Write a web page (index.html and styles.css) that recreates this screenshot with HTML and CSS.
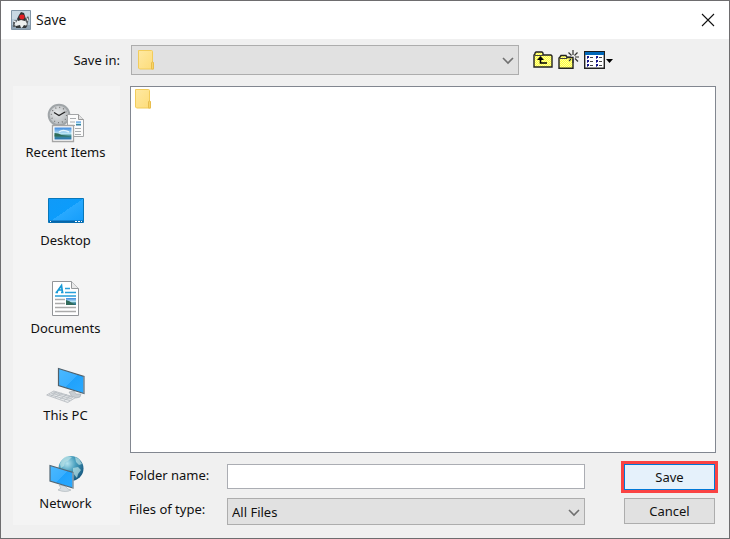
FILE: index.html
```html
<!DOCTYPE html>
<html lang="en">
<head>
<meta charset="utf-8">
<title>Save</title>
<link rel="stylesheet" href="styles.css">
</head>
<body>
<svg class="defs" aria-hidden="true">
  <defs>
    <linearGradient id="screen" x1="0" y1="0" x2="1" y2="1"><stop offset="0" stop-color="#109af8"/><stop offset=".5" stop-color="#0c9cfb"/><stop offset=".5" stop-color="#28a9ff"/><stop offset="1" stop-color="#139cfa"/></linearGradient>
    <linearGradient id="monitor" x1="0" y1="0" x2="1" y2="1"><stop offset="0" stop-color="#4bb9ff"/><stop offset=".5" stop-color="#3aafff"/><stop offset=".5" stop-color="#20a2fc"/><stop offset="1" stop-color="#2aa9ff"/></linearGradient>
    <linearGradient id="photo" x1="0" y1="0" x2="0" y2="1"><stop offset="0" stop-color="#3c87dc"/><stop offset=".5" stop-color="#b9e4f5"/><stop offset=".7" stop-color="#3d8a8f"/><stop offset="1" stop-color="#2b75b5"/></linearGradient>
    <linearGradient id="folder-fill" x1="0" y1="0" x2="1" y2="1"><stop offset="0" stop-color="#ffe9a2"/><stop offset="1" stop-color="#fddc79"/></linearGradient>
    <radialGradient id="globe" cx=".35" cy=".3" r=".75"><stop offset="0" stop-color="#b5e3ee"/><stop offset=".45" stop-color="#489fbe"/><stop offset="1" stop-color="#15577f"/></radialGradient>
    <radialGradient id="clock" cx=".4" cy=".4" r=".6"><stop offset="0" stop-color="#e6e8e9"/><stop offset="1" stop-color="#b5b9bc"/></radialGradient>
    <pattern id="dither" width="2" height="2" patternUnits="userSpaceOnUse"><path fill="#ffff3c" d="M0 0h2v2H0z"/><path fill="#ffffa0" d="M0 0h1v1H0zM1 1h1v1H1z"/></pattern>
    <symbol id="folder" viewBox="0 0 18 20">
      <path d="M1.500 .5h13q1 0 1 1V12l1 1v6H2.500l-1-1z" fill="url(#folder-fill)" stroke="#f2cc5b"/>
      <path d="M14.500 19v-6l1-1.500 1 1.500v6z" fill="#f8d569" stroke="#e8bd4d"/>
    </symbol>
    <symbol id="chevron" viewBox="0 0 12 8"><path d="M1 1l5 5 5-5" fill="none" stroke="#707070" stroke-width="1.600"/></symbol>
  </defs>
</svg>
<main class="window">
  <header class="titlebar">
    <svg class="app-icon" viewBox="0 0 20 20" aria-hidden="true">
      <path d="M.5.5h19v19H.5z" fill="#b4c7d6" stroke="#8195a6"/>
      <path d="M1 1h18v8H1z" fill="#c8d7e2"/>
      <path d="M1 15h18v4H1z" fill="#8fa3b3"/>
      <path d="M2 11l4-1 2 4-2 3H2zM13 11l4-5 1 2-2 9-3-2z" fill="#5c6265"/>
      <path d="M6 11l4-3 4 2 2 4-2 3-8 1-2-3z" fill="#edf0ef"/>
      <path d="M6 9l2-4 2-3 3 1 2 6-1 2-4-1-3 1z" fill="#303335"/>
      <ellipse cx="11" cy="7" rx="2.600" ry="2.400" fill="#e21e24"/>
      <path d="M5 16l4-1 1 3H5zM13 15l3 1-1 2h-4z" fill="#34383a"/>
      <path d="M2 11l3 1-1 3M16 8l1 3" fill="none" stroke="#eef1f2"/>
    </svg>
    <h1 class="title">Save</h1>
    <button class="close" type="button" aria-label="Close">
      <svg viewBox="0 0 14 14" aria-hidden="true"><path d="M1 1l12 12M13 1L1 13" fill="none" stroke="#111" stroke-width="1.100"/></svg>
    </button>
  </header>
  <form class="dialog">
    <label class="look-label" for="look">Save in:</label>
    <div class="top-row">
      <div class="combo combo-look">
        <select id="look"><option aria-label="Folder"></option></select>
        <svg class="combo-folder" aria-hidden="true"><use href="#folder"/></svg>
        <svg class="chevron" aria-hidden="true"><use href="#chevron"/></svg>
      </div>
      <div class="tools">
        <button class="tool" type="button" aria-label="Up one level">
          <svg width="20" height="18" viewBox="0 0 20 18" aria-hidden="true">
            <path d="M1 4l1-1V2l1-1h6l1 1v2h8l1 1v11H1z" fill="url(#dither)" stroke="#222" stroke-width="1.400"/>
            <path d="M2 4.500h8" stroke="#444"/>
            <path d="M7.500 7v5H14" fill="none" stroke="#000" stroke-width="1.600"/><path d="M4 9l3.500-4L11 9z"/>
          </svg>
        </button>
        <button class="tool" type="button" aria-label="Create new folder">
          <svg width="21" height="20" viewBox="0 0 21 20" aria-hidden="true">
            <path d="M1 8l1-1 1-1.500h5L9 7.500h6v10.800H1z" fill="url(#dither)" stroke="#222" stroke-width="1.400"/>
            <path d="M2 8.500h7" stroke="#444"/>
            <path d="M15 0v5M15 9v4M9 7h4M17 7h4M10.500 2.500l3 3M17 8.500l3 3M19.500 2.500l-3 3M13 9l-2 2" stroke="#333" stroke-width="1.200"/>
          </svg>
        </button>
        <button class="tool" type="button" aria-label="View menu">
          <svg width="30" height="18" viewBox="0 0 30 18" aria-hidden="true">
            <path d="M.7.7h19.600v16.600H.7z" fill="#fff" stroke="#222" stroke-width="1.400"/>
            <path d="M1 1h19v3H1z" fill="#0067b8"/><path d="M0 .5h21" stroke="#1b1b1b"/>
            <path d="M3 5h2v2H3zM3 9h2v2H3zM3 13h2v2H3zM12 5h2v2h-2zM12 9h2v2h-2zM12 13h2v2h-2z" fill="#16168c"/>
            <path d="M3 7.500h1M3 11.500h1M3 15.500h1M12 7.500h1M12 11.500h1M12 15.500h1" stroke="#5555aa"/>
            <path d="M6 6.500h3M6 10.500h3M6 14.500h3M15 6.500h3M15 10.500h3M15 14.500h3" stroke="#444"/>
            <path d="M22 8h7l-3.500 4z"/>
          </svg>
        </button>
      </div>
    </div>
    <nav class="places" aria-label="Places">
      <button class="place" type="button">
        <svg viewBox="0 0 40 40" aria-hidden="true">
          <circle cx="13" cy="12" r="10.300" fill="url(#clock)" stroke="#a0a5a8" stroke-width="2"/>
          <circle cx="13" cy="12" r="7.600" fill="none" stroke="#777" stroke-width="1.300" stroke-dasharray="1 2.980"/>
          <path d="M8 9.500l5 3 6-3.500" fill="none" stroke="#252525" stroke-width="1.400"/>
          <path d="M21.500 11.500h11l5 5v17h-16z" fill="#fbfbfb" stroke="#a3a5a7"/><path d="M32.500 11.500v5h5" fill="#e0e0e0" stroke="#999"/>
          <path d="M24 15.500h6M24 19h5M24 22.500h5M29 25.500h6M29 28.500h6M29 31.500h6" stroke="#a9acaf"/>
          <path d="M30 18.500h5v4h-5z" fill="url(#photo)"/>
          <path d="M6.500 22.500h21v16h-21z" fill="#fff" stroke="#a5a5a5" stroke-width="1.300"/>
          <path d="M8.500 24.500h17v12h-17z" fill="url(#photo)"/>
          <path d="M8.500 30q4 0 7 2l10 1.500h-17z" fill="#2f6c58"/><path d="M13 29q4-3 10 0" fill="none" stroke="#e6f6fc" stroke-width="1.500"/>
        </svg>
        <span>Recent Items</span>
      </button>
      <button class="place" type="button">
        <svg viewBox="0 0 40 40" aria-hidden="true">
          <path d="M2.500 7.500h35v24h-35z" fill="url(#screen)" stroke="#0877b9"/>
          <path d="M3 29.500h34v2H3z" fill="#0864a8"/>
          <path d="M4 30.500h1M29 30.500h2M32 30.500h2M35 30.500h1" stroke="#fff"/>
        </svg>
        <span>Desktop</span>
      </button>
      <button class="place" type="button">
        <svg viewBox="0 0 40 40" aria-hidden="true">
          <path d="M6.500 2.500h19l7 7v27h-26z" fill="#fff" stroke="#929598"/>
          <path d="M25.500 2.500v7h7" fill="#e9e9e9" stroke="#96999b"/>
          <path d="M10.500 13.500l5-7 1 7M12 11h4.500M9.500 13.500h2.500M15 13.500h2.500" fill="none" stroke="#199bd7" stroke-width="1.700"/>
          <path d="M19 9.500h5M19 13.500h11M9 17h21" stroke="#279fd9" stroke-width="1.500"/>
          <path d="M9 20.500h10M9 24.500h10M9 28.500h21M9 32.500h21" stroke="#aaa" stroke-width="1.400"/>
          <path d="M20 19h10v7H20z" fill="url(#photo)"/><path d="M20 21q4 1 6 3l4 2H20z" fill="#336b5b"/>
        </svg>
        <span>Documents</span>
      </button>
      <button class="place" type="button">
        <svg viewBox="0 0 40 40" aria-hidden="true">
          <path d="M23 26l5-1 2 3h5l-1 3q-4 2-8 0l-1-2z" fill="#c8cdd1" stroke="#a2abb2" stroke-width=".6"/>
          <path d="M12.500 2.500l25.500 8v17l-25.500-8z" fill="url(#monitor)" stroke="#50606b" stroke-width="1.200"/>
          <path d="M38 10.500v17" stroke="#9ca9b2"/>
          <path d="M.7 29l7-4 22 6.500-8 5z" fill="#e6e8ea" stroke="#b3b8bc" stroke-width=".8"/>
          <path d="M3 28.500l21 6M5 27l21 6M7 26l20 5.500M5 30l6-4M9 31.500l7-4.500M14 33l7-4.500M18 34.500l7-4.500" stroke="#b4babf" stroke-width=".8"/>
        </svg>
        <span>This PC</span>
      </button>
      <button class="place" type="button">
        <svg viewBox="0 0 40 40" aria-hidden="true">
          <circle cx="25" cy="14.500" r="12.500" fill="url(#globe)"/>
          <path d="M14 10q2-6 7-8l5 1-4 4-3 1-1 4-3 2zM29 3l4 2 3 5-3 1-3-3zM27 14l5-1 3 3-3 4-1 4-4-5z" fill="#b9e1e5" opacity=".7"/>
          <path d="M13 31l6 1 3 3 3 1q-5 3-13 0l3-2z" fill="#d7dde1" stroke="#a6b0b6" stroke-width=".6"/>
          <path d="M4 11.500l23 7v15.500l-23-7z" fill="url(#monitor)" stroke="#536775" stroke-width="1.200"/>
          <path d="M27 18.500v15.500" stroke="#a9bac6"/>
        </svg>
        <span>Network</span>
      </button>
    </nav>
    <ul class="files" aria-label="Files">
      <li><svg class="file-folder" role="img" aria-label="Folder"><use href="#folder"/></svg></li>
    </ul>
    <div class="fields">
      <label for="name">Folder name:</label>
      <input id="name" type="text">
      <button class="action primary" type="submit">Save</button>
      <label for="type">Files of type:</label>
      <div class="combo combo-type">
        <select id="type"><option>All Files</option></select>
        <svg class="chevron" aria-hidden="true"><use href="#chevron"/></svg>
      </div>
      <button class="action" type="button">Cancel</button>
    </div>
  </form>
</main>
</body>
</html>
```

FILE: styles.css
```css
* { box-sizing: border-box; }

body {
  margin: 0;
  color: #111;
  font: 13px/18px "Noto Sans", "Open Sans", sans-serif;
}

button, input, select { margin: 0; color: inherit; font: inherit; }
svg { display: block; }
.defs { position: absolute; width: 0; height: 0; }

.window {
  display: flex;
  flex-direction: column;
  min-height: 100vh;
  background: #f0f0f0;
  border: 1px solid #6e6d6f;
}

.titlebar {
  display: flex;
  align-items: center;
  height: 38px;
  padding: 0 14px 0 10px;
  background: #fff;
}
.app-icon { width: 20px; height: 20px; }
.title { margin: 0 0 0 5px; font: 14px/20px "Open Sans", sans-serif; }
.close { margin-left: auto; padding: 0; border: 0; background: none; }
.close svg { width: 14px; height: 14px; }

.dialog {
  flex: 1;
  display: grid;
  grid-template-columns: 107px 1fr;
  grid-template-rows: 30px 1fr auto;
  column-gap: 10px;
  row-gap: 11px;
  padding: 6px 13px 13px 12px;
}

.look-label { align-self: center; text-align: right; }
.top-row { display: flex; align-items: center; gap: 14px; padding-left: 1px; }
.tools { display: flex; align-items: center; gap: 5px; width: 183px; }
.tool { padding: 0; border: 0; background: none; }

.combo { position: relative; flex: 1; }
.combo select {
  display: block;
  width: 100%;
  height: 100%;
  padding: 0 28px 0 4px;
  appearance: none;
  background: #e1e1e1;
  border: 1px solid #adadad;
  border-radius: 0;
}
.combo-look { height: 30px; }
.combo-type { height: 27px; }
.chevron { position: absolute; right: 5px; top: 50%; width: 12px; height: 8px; margin-top: -3px; pointer-events: none; }
.combo-folder { position: absolute; left: 6px; top: 5px; width: 18px; height: 20px; pointer-events: none; }

.places {
  grid-row: 2 / 4;
  display: flex;
  flex-direction: column;
  background: #f4f4f4;
}
.place {
  flex: 1;
  display: flex;
  flex-direction: column;
  align-items: center;
  padding: 17px 2px 0 0;
  border: 0;
  background: none;
}
.place svg { width: 40px; height: 40px; }

.files {
  margin: 0;
  padding: 2px 3px;
  list-style: none;
  background: #fff;
  border: 1px solid #828790;
}
.file-folder { width: 18px; height: 20px; }

.fields {
  display: grid;
  grid-template-columns: 97px 1fr 130px;
  grid-template-rows: 26px 27px;
  row-gap: 8px;
  align-items: start;
  padding-right: 1px;
}
.fields label { margin-left: -1px; padding-top: 2px; }
.fields input {
  width: 100%;
  height: 25px;
  padding: 0 4px;
  background: #fff;
  border: 1px solid #abadb3;
}
.action {
  justify-self: end;
  width: 91px;
  height: 26px;
  padding: 0;
  background: #e1e1e1;
  border: 1px solid #adadad;
}
.primary {
  background: #e5f1fb;
  border-color: #0078d7;
  outline: 3px solid #fa4343;
}
```
